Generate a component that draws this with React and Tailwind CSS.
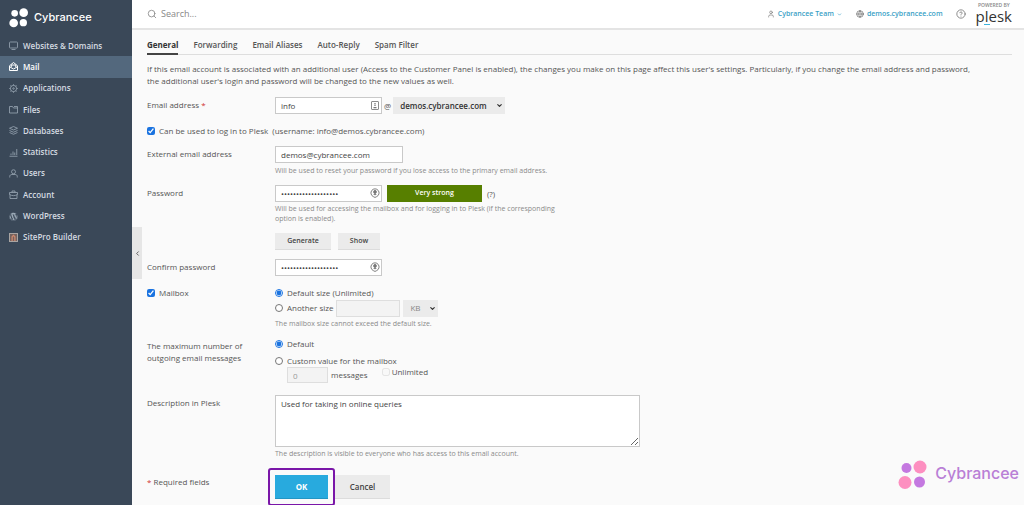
import React from "react";
import { Search, User, Globe, CircleHelp, ChevronDown, ChevronLeft } from "lucide-react";
import { FaWordpress } from "react-icons/fa";

function Icon({ children, className = "size-[9px]" }) {
  return (
    <svg viewBox="0 0 18 18" className={className} fill="none" stroke="currentColor" strokeWidth="1.6" aria-hidden="true">
      {children}
    </svg>
  );
}

const nav = [
  {
    label: "Websites & Domains",
    icon: (
      <Icon>
        <rect x="1" y="2" width="16" height="12" rx="1.5" />
        <path d="M5 17h8" />
      </Icon>
    ),
  },
  {
    label: "Mail",
    active: true,
    icon: (
      <Icon>
        <path d="M1 7.500 9 1l8 6.500V17H1z" strokeWidth="2" />
        <path d="M4.500 10V6h9v4M1 9.500l8 4.500 8-4.500" strokeWidth="2" />
      </Icon>
    ),
  },
  {
    label: "Applications",
    icon: (
      <Icon>
        <circle cx="9" cy="9" r="6.3" />
        <circle cx="9" cy="9" r="1.5" />
        <path d="M9 .5v2.500M9 15v2.500M.5 9H3M15 9h2.500M3 3l1.700 1.700M13.300 13.300 15 15M3 15l1.700-1.700M13.300 4.700 15 3" />
      </Icon>
    ),
  },
  {
    label: "Files",
    icon: (
      <Icon>
        <path d="M1 3h6l2 3h8v10H1zM10 3h7v3" />
      </Icon>
    ),
  },
  {
    label: "Databases",
    icon: (
      <Icon>
        <path d="m9 1 8 3.500L9 8 1 4.500zM1 9l8 3.500L17 9M1 13l8 3.500 8-3.500" />
      </Icon>
    ),
  },
  {
    label: "Statistics",
    icon: (
      <Icon>
        <path d="M1 16.500h16M4 14v-3M8 14V7M11.500 14V9M15.500 14V2" />
      </Icon>
    ),
  },
  {
    label: "Users",
    icon: (
      <Icon>
        <circle cx="9" cy="5.500" r="4" />
        <path d="M1.500 17v-2.500c0-2 2-3.500 4.500-3.500h6c2.500 0 4.500 1.500 4.500 3.500V17" />
      </Icon>
    ),
  },
  {
    label: "Account",
    icon: (
      <Icon>
        <path d="M2 9v8h14V9M1 5h16v4c-5 3-11 3-16 0zM6 5V2h6v3" />
      </Icon>
    ),
  },
  { label: "WordPress", icon: <FaWordpress className="size-[9px]" aria-hidden="true" /> },
  {
    label: "SitePro Builder",
    icon: (
      <svg viewBox="0 0 18 18" className="size-[9px]" aria-hidden="true">
        <rect width="18" height="18" fill="#a9a5a3" />
        <rect x="2" y="2" width="14" height="14" fill="#75625e" />
        <path d="M5 16V7l4-4 4 4v9h-2.500V8L9 6.500 7.500 8v8z" fill="#cf8a70" />
      </svg>
    ),
  },
];

const tabs = ["General", "Forwarding", "Email Aliases", "Auto-Reply", "Spam Filter"];

const field = "h-[17px] border border-[#c9c9c9] bg-white px-[5px] text-[8px] text-[#444] outline-none";
const grey = "bg-[#ebebeb] font-semibold text-[#444] border-b border-[#dcdcdc]";

function Dots({ className, a, b }) {
  return (
    <svg viewBox="0 0 30 30" className={className} aria-hidden="true">
      <circle cx="8.500" cy="8" r="5" fill={a} />
      <circle cx="22" cy="7" r="6.500" fill={b} />
      <circle cx="7" cy="22.500" r="6.500" fill={b} />
      <circle cx="21.500" cy="22" r="5.500" fill={a} />
    </svg>
  );
}

function Hint({ children }) {
  return <p className="text-[7px] leading-[10px] text-[#8a8a8a]">{children}</p>;
}

function Row({ label, htmlFor, children, className = "" }) {
  return (
    <div className={`grid grid-cols-[128px_minmax(0,1fr)] ${className}`}>
      <label htmlFor={htmlFor} className="pr-4 leading-[15px]">{label}</label>
      <div>{children}</div>
    </div>
  );
}

function PasswordField({ id }) {
  return (
    <span className="relative flex w-[107px]">
      <input id={id} type="password" defaultValue="cybranceepassword12" className={`${field} w-full`} />
      <svg viewBox="0 0 18 18" className="absolute right-[2px] top-[3px] size-[10px]" fill="none" stroke="#777" strokeWidth="1.700" aria-hidden="true">
        <path d="M6 15.500A7.300 7.300 0 1 1 12 15.500L9 17z" />
        <circle cx="9" cy="7" r="2.500" fill="#777" />
        <path d="M9 8v5M6.500 11.500h5" />
      </svg>
    </span>
  );
}

function Select({ label, value, className, disabled }) {
  return (
    <span className="relative flex">
      <select aria-label={label} disabled={disabled} className={`h-[17px] appearance-none bg-[#ebebeb] px-[7px] outline-none ${className}`}>
        <option>{value}</option>
      </select>
      <ChevronDown className="pointer-events-none absolute right-[2px] top-[5px] size-[7px] text-[#333]" strokeWidth={4} aria-hidden="true" />
    </span>
  );
}

export default function App() {
  return (
    <div className="flex min-h-screen bg-[#fafafa] font-['Open_Sans',sans-serif] text-[8px] text-[#555]">
      <aside className="relative w-[132px] shrink-0 bg-[#3a4858] text-[#d5dbe1]">
        <a href="#home" className="flex h-[35px] items-center gap-[5px] pl-[9px] text-white">
          <Dots className="size-5" a="#fff" b="#fff" />
          <span className="pb-px font-['Inter',sans-serif] text-[11px] font-medium">Cybrancee</span>
        </a>
        <nav className="grid h-[213px] auto-rows-fr">
          {nav.map((n) => (
            <a
              key={n.label}
              href="#nav"
              className={`flex items-center gap-[5px] pl-[9px] font-semibold ${n.active ? "bg-[#53687d] text-white" : ""}`}
            >
              <span className={n.active ? "" : "text-[#9aa8b5]"}>{n.icon}</span>
              {n.label}
            </a>
          ))}
        </nav>
        <button type="button" aria-label="Collapse sidebar" className="absolute left-full top-[227px] flex h-[52px] w-[10px] items-center justify-center bg-[#e6e6e6] text-[#555]">
          <ChevronLeft className="size-[7px]" strokeWidth={3} />
        </button>
      </aside>

      <div className="flex min-w-0 flex-1 flex-col">
        <header className="flex h-[30px] items-center border-b-2 border-[#e4e4e4] bg-white pl-[15px] pr-[12px]">
          <Search className="size-[10px] text-[#888]" aria-hidden="true" />
          <input aria-label="Search" placeholder="Search..." className="ml-1 min-w-0 flex-1 text-[9px] outline-none placeholder:text-[#888]" />
          <a href="#team" className="flex items-center gap-[3px] text-[7px] font-semibold text-[#3a9fc6]">
            <User className="size-[8px] text-[#777]" aria-hidden="true" />
            Cybrancee Team
            <ChevronDown className="size-[5px]" strokeWidth={3} aria-hidden="true" />
          </a>
          <a href="#site" className="ml-[14px] flex items-center gap-[3px] text-[7px] font-semibold text-[#3a9fc6]">
            <Globe className="size-[8px] text-[#666]" aria-hidden="true" />
            demos.cybrancee.com
          </a>
          <button type="button" aria-label="Help" className="ml-[13px] text-[#777]">
            <CircleHelp className="size-[10px]" />
          </button>
          <a href="#plesk" className="ml-[10px] flex flex-col items-center text-[#333]">
            <span className="text-[5px] font-semibold leading-[5px] text-[#888]">POWERED BY</span>
            <span className="relative text-[15px] leading-[17px]">
              plesk
              <span className="absolute bottom-0 left-[8px] h-px w-[6px] bg-[#3fb4dc]" />
            </span>
          </a>
        </header>

        <main className="pl-[15px] pr-[12px]">
          <nav className="flex h-[25px] gap-[15px] border-b border-[#dedede]">
            {tabs.map((t, i) => (
              <a key={t} href="#tab" className={`-mb-px flex items-center border-b-2 pt-[7px] ${i === 0 ? "border-[#444] font-bold text-[#333]" : "border-transparent font-semibold"}`}>
                {t}
              </a>
            ))}
          </nav>

          <form onSubmit={(e) => e.preventDefault()}>
            <p className="mt-2 pr-8 leading-[12px]">
              If this email account is associated with an additional user (Access to the Customer Panel is enabled), the changes you make on this page affect this user's settings. Particularly, if you change the email address and password, the additional user's login and password will be changed to the new values as well.
            </p>

            <Row htmlFor="email" className="mt-[10px]" label={<>Email address <span className="text-[#d0302f]">*</span></>}>
              <div className="flex items-center gap-[2px]">
                <span className="relative flex w-[107px]">
                  <input id="email" defaultValue="info" className={`${field} w-full`} />
                  <svg viewBox="0 0 16 18" className="absolute right-[3px] top-1 h-[9px] w-[8px]" fill="none" stroke="#777" strokeWidth="1.700" aria-hidden="true">
                    <rect x="1" y="1" width="14" height="16" rx="1" />
                    <path d="M8 4v3M8 8v2M5 13h6" strokeWidth="2.500" />
                  </svg>
                </span>
                @
                <Select label="Domain" value="demos.cybrancee.com" className="w-[112px] font-semibold text-[#333]" />
              </div>
            </Row>

            <label className="mt-[11px] flex h-[12px] items-center gap-1">
              <input type="checkbox" defaultChecked className="size-[8px] accent-[#1a73e0]" />
              Can be used to log in to Plesk&nbsp; (username: info@demos.cybrancee.com)
            </label>

            <Row htmlFor="external" label="External email address" className="mt-[9px]">
              <input id="external" defaultValue="demos@cybrancee.com" className={`${field} block w-[128px]`} />
              <div className="mt-[3px]"><Hint>Will be used to reset your password if you lose access to the primary email address.</Hint></div>
            </Row>

            <Row htmlFor="password" label="Password" className="mt-[9px]">
              <div className="flex items-center gap-[5px]">
                <PasswordField id="password" />
                <span className="flex h-[17px] w-[95px] items-center justify-center bg-[#577f00] text-[7px] font-semibold text-white">Very strong</span>
                (?)
              </div>
              <div className="mt-[2px] w-[290px]"><Hint>Will be used for accessing the mailbox and for logging in to Plesk (if the corresponding option is enabled).</Hint></div>
              <div className="mt-[9px] flex gap-[7px]">
                <button type="button" className={`${grey} h-[17px] w-[56px] text-[7px]`}>Generate</button>
                <button type="button" className={`${grey} h-[17px] w-[42px] text-[7px]`}>Show</button>
              </div>
            </Row>

            <Row htmlFor="confirm" label="Confirm password" className="mt-[9px]">
              <PasswordField id="confirm" />
            </Row>

            <Row
              htmlFor="mailbox"
              className="mt-[9px]"
              label={
                <span className="flex items-center gap-1">
                  <input id="mailbox" type="checkbox" defaultChecked className="size-[8px] accent-[#1a73e0]" />
                  Mailbox
                </span>
              }
            >
              <label className="flex h-[15px] items-center gap-1">
                <input type="radio" name="size" defaultChecked className="size-[8px] accent-[#1a73e0]" />
                Default size (Unlimited)
              </label>
              <div className="flex h-[16px] items-center gap-[3px]">
                <label className="flex items-center gap-1">
                  <input type="radio" name="size" className="size-[8px]" />
                  Another size
                </label>
                <input aria-label="Mailbox size" disabled className="h-[17px] w-[64px] border border-[#dedede] bg-[#f3f3f3]" />
                <Select label="Unit" value="KB" disabled className="w-[35px] text-[#888]" />
              </div>
              <div className="mt-[3px]"><Hint>The mailbox size cannot exceed the default size.</Hint></div>
            </Row>

            <div className="mt-[9px] grid grid-cols-[128px_minmax(0,1fr)]">
              <span className="pr-4 pt-[2px] leading-[12px]">The maximum number of outgoing email messages</span>
              <div>
                <label className="flex h-[12px] items-center gap-1">
                  <input type="radio" name="limit" defaultChecked className="size-[8px] accent-[#1a73e0]" />
                  Default
                </label>
                <label className="mt-1 flex h-[13px] items-center gap-1">
                  <input type="radio" name="limit" className="size-[8px]" />
                  Custom value for the mailbox
                </label>
                <div className="flex pl-3">
                  <label className="flex items-center gap-[3px]">
                    <input disabled defaultValue="0" className="h-[16px] w-[41px] border border-[#dedede] bg-[#f3f3f3] px-[5px] text-[#999]" />
                    messages
                  </label>
                  <label className="ml-[14px] flex h-[10px] items-center gap-[2px]">
                    <input type="checkbox" disabled className="size-[8px] opacity-50" />
                    Unlimited
                  </label>
                </div>
              </div>
            </div>

            <Row htmlFor="description" label="Description in Plesk" className="mt-[12px]">
              <textarea id="description" defaultValue="Used for taking in online queries" className="block h-[52px] w-[365px] border border-[#c9c9c9] bg-white px-[5px] py-[2px] leading-[12px] text-[#444] outline-none" />
              <div className="mt-[2px]"><Hint>The description is visible to everyone who has access to this email account.</Hint></div>
            </Row>

            <div className="mt-[9px] grid grid-cols-[128px_minmax(0,1fr)]">
              <span className="pt-2"><span className="text-[#d0302f]">*</span> Required fields</span>
              <div className="-ml-[7px] flex items-center">
                <span className="rounded-[3px] border-2 border-[#7a16a8] p-[5px]">
                  <button type="submit" className="block h-[24px] w-[53px] border-b border-[#2295c4] bg-[#28aade] font-bold text-white">OK</button>
                </span>
                <button type="button" className={`${grey} h-[24px] w-[55px]`}>Cancel</button>
              </div>
            </div>
          </form>
        </main>
      </div>

      <div className="pointer-events-none absolute bottom-[15px] right-[5px] flex items-center gap-[7px]">
        <Dots className="size-[30px]" a="#c478e0" b="#fd8fc0" />
        <span className="pb-1 font-['Inter',sans-serif] text-[16px] font-medium text-[#b97fd6]">Cybrancee</span>
      </div>
    </div>
  );
}
